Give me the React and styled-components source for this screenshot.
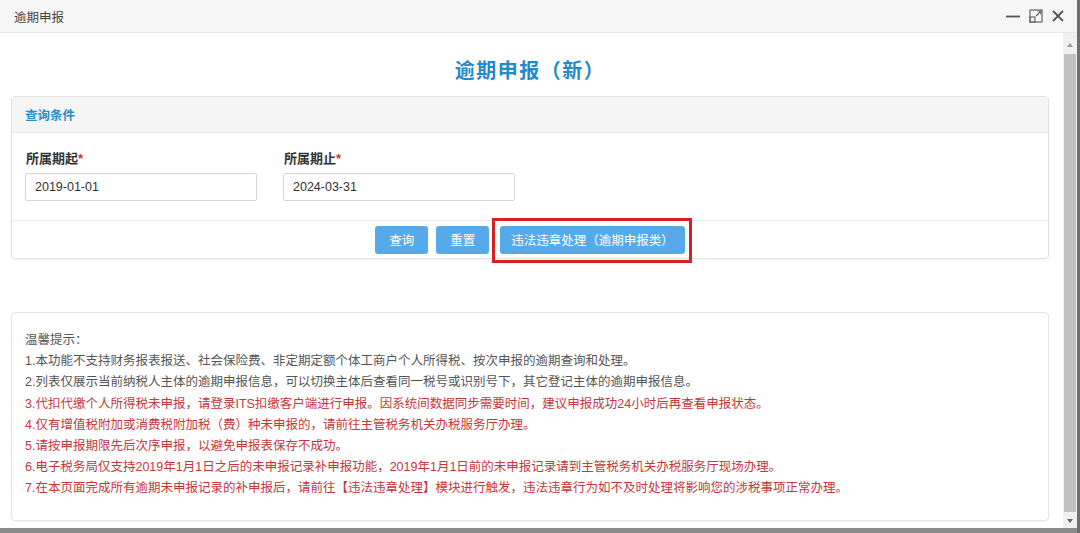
import React from "react";
import styled, { createGlobalStyle } from "styled-components";

const GlobalStyle = createGlobalStyle`
  html, body {
    margin: 0;
    padding: 0;
    background: #fff;
    font-family: "Liberation Sans", "Noto Sans CJK SC", sans-serif;
    overflow: hidden;
  }
`;

const Window = styled.div`
  width: 1080px;
  height: 533px;
  display: flex;
  flex-direction: column;
  background: #fff;
  border-right: 3px solid #6f6f6f;
  box-sizing: border-box;
`;

const TitleBar = styled.div`
  height: 33px;
  flex-shrink: 0;
  display: flex;
  align-items: center;
  justify-content: space-between;
  padding: 0 12px 0 14px;
  background: #f6f6f6;
  border-bottom: 1px solid #e6e6e6;
  box-sizing: border-box;
`;

const WinTitle = styled.span`
  font-size: 12.5px;
  color: #444;
`;

const WinTools = styled.div`
  display: flex;
  align-items: center;
  gap: 8px;
  color: #555;
`;

const Body = styled.div`
  flex: 1;
  display: flex;
  min-height: 0;
`;

const Content = styled.div`
  flex: 1;
  padding: 0 14px 0 11px;
  display: flex;
  flex-direction: column;
`;

const PageTitle = styled.h1`
  margin: 0;
  height: 63px;
  box-sizing: border-box;
  padding-top: 9px;
  display: flex;
  align-items: center;
  justify-content: center;
  font-size: 20px;
  font-weight: bold;
  color: #2389c9;
  letter-spacing: 1.5px;
`;

const Panel = styled.div`
  border: 1px solid #e2e2e2;
  border-radius: 4px;
  box-shadow: 0 1px 2px rgba(0, 0, 0, 0.05);
`;

const PanelHead = styled.div`
  height: 35px;
  display: flex;
  align-items: center;
  padding-left: 13px;
  background: #f5f5f5;
  border-bottom: 1px solid #e6e6e6;
  font-size: 12.5px;
  font-weight: bold;
  color: #2a8cc8;
`;

const PanelBody = styled.div`
  display: flex;
  gap: 26px;
  padding: 17px 13px 19px;
  border-bottom: 1px solid #ececec;
`;

const Field = styled.div`
  display: flex;
  flex-direction: column;
  gap: 5px;
`;

const Label = styled.label`
  font-size: 13px;
  line-height: 18px;
  font-weight: bold;
  color: #333;
  padding-left: 1px;
  span {
    color: #d9302c;
  }
`;

const Input = styled.input`
  width: 232px;
  height: 28px;
  box-sizing: border-box;
  border: 1px solid #d6d6d6;
  border-radius: 2px;
  padding: 0 9px;
  font-family: "Liberation Sans", sans-serif;
  font-size: 12.5px;
  color: #333;
  outline: none;
`;

const PanelFoot = styled.div`
  height: 37px;
  display: flex;
  align-items: center;
  justify-content: center;
  gap: 8px;
`;

const Button = styled.button`
  height: 28px;
  padding: 0 ${(p) => (p.$wide ? "11px" : "14px")};
  margin-left: ${(p) => (p.$wide ? "3px" : "0")};
  border: none;
  border-radius: 3px;
  background: #57aaea;
  color: #fff;
  font-family: "Noto Sans CJK SC", sans-serif;
  font-size: 12.5px;
`;

const Marked = styled.div`
  position: relative;
  display: flex;
  &::after {
    content: "";
    position: absolute;
    top: -8px;
    bottom: -9px;
    left: -5px;
    right: -7px;
    border: 3px solid #d81f28;
    pointer-events: none;
  }
`;

const Notice = styled.div`
  margin-top: 53px;
  border: 1px solid #e4e4e4;
  border-radius: 4px;
  padding: 17px 13px 20px;
  box-shadow: 0 1px 2px rgba(0, 0, 0, 0.04);
`;

const Line = styled.p`
  margin: 0;
  font-size: 12.5px;
  line-height: 21.2px;
  color: ${(p) => (p.$warn ? "#c8363a" : "#555")};
  white-space: nowrap;
`;

const Scrollbar = styled.div`
  width: 14px;
  flex-shrink: 0;
  background: #f0f0f0;
  display: flex;
  flex-direction: column;
  align-items: center;
  padding-top: 5px;
  box-sizing: border-box;
`;

const Arrow = styled.div`
  width: 0;
  height: 0;
  border-left: 3px solid transparent;
  border-right: 3px solid transparent;
  ${(p) => (p.$down ? "border-top: 4px solid #666;" : "border-bottom: 4px solid #999;")}
  margin: 5px 0;
`;

const Thumb = styled.div`
  width: 12px;
  flex: 1;
  background: #c1c1c1;
  margin: 2px 0;
`;

const BottomBar = styled.div`
  height: 5px;
  flex-shrink: 0;
  background: #8c8c8c;
`;

const tips = [
  { t: "温馨提示：" },
  { t: "1.本功能不支持财务报表报送、社会保险费、非定期定额个体工商户个人所得税、按次申报的逾期查询和处理。" },
  { t: "2.列表仅展示当前纳税人主体的逾期申报信息，可以切换主体后查看同一税号或识别号下，其它登记主体的逾期申报信息。" },
  { t: "3.代扣代缴个人所得税未申报，请登录ITS扣缴客户端进行申报。因系统间数据同步需要时间，建议申报成功24小时后再查看申报状态。", warn: true },
  { t: "4.仅有增值税附加或消费税附加税（费）种未申报的，请前往主管税务机关办税服务厅办理。", warn: true },
  { t: "5.请按申报期限先后次序申报，以避免申报表保存不成功。", warn: true },
  { t: "6.电子税务局仅支持2019年1月1日之后的未申报记录补申报功能，2019年1月1日前的未申报记录请到主管税务机关办税服务厅现场办理。", warn: true },
  { t: "7.在本页面完成所有逾期未申报记录的补申报后，请前往【违法违章处理】模块进行触发，违法违章行为如不及时处理将影响您的涉税事项正常办理。", warn: true },
];

export default function App() {
  return (
    <>
      <GlobalStyle />
      <Window>
        <TitleBar>
          <WinTitle>逾期申报</WinTitle>
          <WinTools>
            <svg width="16" height="14" viewBox="0 0 16 14">
              <line x1="1" y1="7.5" x2="15" y2="7.5" stroke="#555" strokeWidth="1.8" />
            </svg>
            <svg width="14" height="14" viewBox="0 0 14 14" fill="none" stroke="#666" strokeWidth="1.2">
              <rect x="1" y="1" width="12" height="12" />
              <rect x="1" y="8" width="5" height="5" />
              <path d="M7 7 L12 2 M8.5 2 H12 V5.5" />
            </svg>
            <svg width="14" height="14" viewBox="0 0 14 14" stroke="#555" strokeWidth="1.8">
              <path d="M2 2 L12 12 M12 2 L2 12" />
            </svg>
          </WinTools>
        </TitleBar>
        <Body>
          <Content>
            <PageTitle>逾期申报（新）</PageTitle>
            <Panel>
              <PanelHead>查询条件</PanelHead>
              <PanelBody>
                <Field>
                  <Label>所属期起<span>*</span></Label>
                  <Input defaultValue="2019-01-01" />
                </Field>
                <Field>
                  <Label>所属期止<span>*</span></Label>
                  <Input defaultValue="2024-03-31" />
                </Field>
              </PanelBody>
              <PanelFoot>
                <Button>查询</Button>
                <Button>重置</Button>
                <Marked>
                  <Button $wide>违法违章处理（逾期申报类）</Button>
                </Marked>
              </PanelFoot>
            </Panel>
            <Notice>
              {tips.map((l, i) => (
                <Line key={i} $warn={l.warn}>{l.t}</Line>
              ))}
            </Notice>
          </Content>
          <Scrollbar>
            <Arrow />
            <Thumb />
            <Arrow $down />
          </Scrollbar>
        </Body>
        <BottomBar />
      </Window>
    </>
  );
}
